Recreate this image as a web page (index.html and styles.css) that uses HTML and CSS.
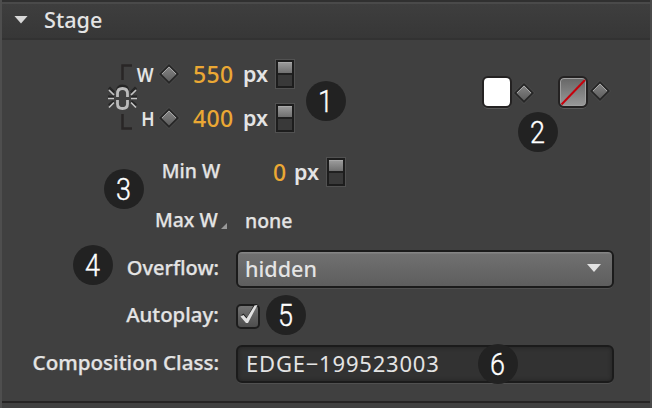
FILE: index.html
```html
<!DOCTYPE html>
<html lang="en">
<head>
<meta charset="utf-8">
<title>Stage</title>
<link rel="stylesheet" href="styles.css">
</head>
<body>
<svg class="defs" width="0" height="0">
  <defs>
    <linearGradient id="dg" x1="0" y1="0" x2="0" y2="1"><stop offset="0" stop-color="#858585"/><stop offset="1" stop-color="#5e5e5e"/></linearGradient>
    <symbol id="diamond" viewBox="0 0 22 22">
      <path d="M11 0L22 11L11 22L0 11Z" fill="#4b4b4b"/>
      <path d="M11 1L21 11L11 21L1 11Z" fill="#262626"/>
      <path d="M11 3.500L18.500 11L11 18.500L3.500 11Z" fill="url(#dg)"/>
      <path d="M4 11L11 4L18 11" fill="none" stroke="#a8a8a8" stroke-width="1"/>
    </symbol>
  </defs>
</svg>
<main class="panel">
  <header class="head"><i class="twist"></i><h1 class="title">Stage</h1></header>
  <section class="body">
    <div class="size">
      <svg class="link" width="30" height="72" viewBox="0 0 30 72">
        <path d="M24 4.500H14.500V19M24 67.500H14.500V53" fill="none" stroke="#292626" stroke-width="2.500"/>
        <g fill="none" stroke="#252525" stroke-width="3" transform="translate(0 -1.500)"><path d="M9.500 35V31Q10 26.500 14.500 26.500Q19.500 26.500 19.500 31V35M1 28L6 33M28 28L23 33M0 37.500H6M23 37.500H29M1 46L6 42M28 46L23 42"/></g>
        <path d="M9.500 36V32.500Q9.500 27.500 14.500 27.500Q19.500 27.500 19.500 32.500V36M9.500 39V43Q9.500 47.500 14.500 47.500Q19.500 47.500 19.500 43V39" fill="none" stroke="#bcbcbc" stroke-width="2.800"/>
        <path d="M1 29L6 34M28 29L23 34M0 37.500H6M23 37.500H29M1 46.500L6 41.500M28 46.500L23 41.500" fill="none" stroke="#c4c4c4" stroke-width="1.700"/>
      </svg>
      <div class="dims">
        <div class="dim"><span class="axis"><b class="t-w">W</b></span><svg class="dia"><use href="#diamond"/></svg><span class="num">550</span><span class="px">px</span><i class="spin"></i></div>
        <div class="dim"><span class="axis"><b class="t-h">H</b></span><svg class="dia"><use href="#diamond"/></svg><span class="num">400</span><span class="px">px</span><i class="spin"></i></div>
      </div>
      <div class="colors">
        <i class="swatch"></i><svg class="dia"><use href="#diamond"/></svg>
        <i class="swatch none"><svg width="26" height="28" viewBox="0 0 26 28"><path d="M1.500 26.500L25 2" stroke="#c6000b" stroke-width="2"/></svg></i><svg class="dia"><use href="#diamond"/></svg>
      </div>
    </div>
    <div class="row min"><label class="label"><span class="t-min">Min W</span></label><span class="num zero">0</span><span class="px">px</span><i class="spin"></i></div>
    <div class="row max"><label class="label"><span class="t-max">Max W</span></label><i class="corner"></i><span class="t-none">none</span></div>
    <div class="row over"><label class="label"><span class="t-over">Overflow:</span></label><div class="select"><span class="t-hidden">hidden</span><i class="arrow"></i></div></div>
    <div class="row auto"><label class="label"><span class="t-auto">Autoplay:</span></label><div class="check"><svg width="24" height="25" viewBox="0 0 24 25"><path d="M5.500 13L7.500 11.500L11 15.500L18 2.500H21L12 20H10.500Z" fill="#222" transform="translate(0 -2)"/><path d="M4.500 12.500L7.500 11L10.500 14.500L18.500 1.500L21.500 1L12 19H10Z" fill="#e2e2e2"/></svg></div></div>
    <div class="row comp"><label class="label"><span class="t-comp">Composition Class:</span></label><div class="input"><span class="t-edge">EDGE−199523003</span></div></div>
  </section>
  <span class="note n1"><b>1</b></span>
  <span class="note n2"><b>2</b></span>
  <span class="note n3"><b>3</b></span>
  <span class="note n4"><b>4</b></span>
  <span class="note n5"><b>5</b></span>
  <span class="note n6"><b>6</b></span>
</main>
</body>
</html>
```
FILE: styles.css
```css
* { box-sizing: border-box; }
body { margin: 0; background: #404040; font-family: "Noto Sans", sans-serif; color: #e4e4e4; }
.defs { position: absolute; }
.panel { position: relative; width: 652px; height: 408px; overflow: hidden; border-left: 2px solid #4e4e4e; border-right: 2px solid #4a4a4a; }
.head { display: flex; align-items: center; height: 40px; padding-left: 12px; border-top: 2px solid #303030; border-bottom: 2px solid #323232; background: linear-gradient(#4a4a4a 0 2px, #3e3e3e 2px, #373737); }
.twist { width: 14px; height: 8px; margin-top: -1px; background: #d8d8d8; clip-path: polygon(0 0, 100% 0, 50% 100%); }
.title { margin: 0 0 0 16px; font-size: 22.5px; line-height: 30px; font-weight: 500; transform: scaleX(.96); transform-origin: left; }
.body { height: 363px; padding-top: 12px; border-bottom: 2px solid #262424; }
.size { display: flex; height: 96px; padding-left: 106px; }
.link { margin-top: 9px; flex: none; }
.dims { width: 186px; }
.dim { display: flex; align-items: center; height: 44px; }
.axis { width: 16px; height: 28px; margin-top: -1px; line-height: 28px; font-size: 20.5px; text-align: right; white-space: nowrap; direction: rtl; }
.axis b { font-weight: 600; display: inline-block; transform: scaleX(.86); transform-origin: right; }
.dia { width: 22px; height: 22px; flex: none; margin-top: -1px; }
.axis + .dia { margin-left: 4px; }
.num { width: 42px; margin-left: 13px; color: #eba834; font-size: 23px; line-height: 30px; font-weight: 500; letter-spacing: .4px; }
.px { width: 26px; margin: -1px 0 0 8px; font-size: 21.5px; line-height: 30px; font-weight: 600; }
.spin { width: 18px; height: 28px; margin-left: 7px; flex: none; border: 2px solid #1d1d1d; outline: 1px solid #515151; background: linear-gradient(#aaa 0 1px, #999 1px, #707070 11px, #202020 11px 13px, #393939 13px); }
.colors { display: flex; align-items: flex-start; margin-left: 158px; padding-top: 24px; }
.swatch { width: 30px; height: 32px; border: 2px solid #242222; border-radius: 6px; background: #fff; box-shadow: 0 2px 0 -1px #5a5a5a; }
.colors .dia { margin: 6px 0 0 1px; }
.swatch.none { margin-left: 23px; background: linear-gradient(#666, #999); background-clip: padding-box; box-shadow: inset 0 0 0 1px #a0a0a0, 0 2px 0 -1px #5a5a5a; }
.swatch svg { display: block; }
.colors .dia:last-child { margin-top: 4px; }
.row { display: flex; align-items: center; }
.label { width: 217px; flex: none; margin-top: -2px; font-size: 20px; line-height: 28px; font-weight: 500; -webkit-text-stroke: .25px currentColor; text-align: right; white-space: nowrap; }
.label span { display: inline-block; transform-origin: right; }
.t-min { transform: translateX(1px) scaleX(.97); }
.t-max { transform: translateX(-1px) scaleX(.97); }
.t-auto { transform: scaleX(1.02); }
.t-comp { transform: scaleX(1.03); }
.min { height: 48px; }
.max { height: 50px; }
.over { height: 46px; }
.auto { height: 48px; }
.comp { height: 48px; }
.zero { width: 13px; margin-left: 54px; }
.corner { width: 6px; height: 6px; margin: 10px 0 0 2px; background: #999; clip-path: polygon(100% 0, 100% 100%, 0 100%); }
.t-none { margin: -2px 0 0 18px; font-size: 20.5px; font-weight: 500; -webkit-text-stroke: .25px currentColor; transform: scaleX(.95); transform-origin: left; }
.select, .input { display: flex; align-items: center; width: 378px; height: 38px; margin-left: 17px; border: 2px solid #1b1b1b; border-radius: 6px; box-shadow: 0 2px 0 -1px #505050; font-size: 22px; line-height: 30px; }
.select { justify-content: space-between; padding: 0 11px 0 7px; background: linear-gradient(#858585 0 1px, #707070 2px, #5e5e5e); font-weight: 500; }
.arrow { width: 14px; height: 8px; margin-top: -2px; background: #e2e2e2; clip-path: polygon(0 0, 100% 0, 50% 100%); }
.select span, .input span { margin-top: -2px; transform-origin: left; display: inline-block; white-space: nowrap; }
.t-hidden { transform: scaleX(.98); }
.t-edge { letter-spacing: .8px; }
.input { padding-left: 8px; background: #323232; box-shadow: inset 0 0 4px #222, 0 2px 0 -1px #505050; }
.check { width: 24px; height: 25px; margin-left: 17px; border: 2px solid #1d1d1d; border-radius: 5px; background: linear-gradient(#737373, #4d4d4d); }
.check svg { display: block; margin: -2px; }
.note { position: absolute; width: 40px; height: 40px; border-radius: 50%; background: #222; color: #fff; text-align: center; font: 300 31px/41px Roboto, sans-serif; }
.note b { display: inline-block; font-weight: 300; -webkit-text-stroke: .4px #fff; transform: scaleX(.87); }
.n1 { left: 304px; top: 81px; }
.n2 { left: 516px; top: 112px; }
.n3 { left: 102px; top: 169px; }
.n4 { left: 71px; top: 245px; }
.n5 { left: 264px; top: 295px; }
.n6 { left: 476px; top: 344px; }
```
